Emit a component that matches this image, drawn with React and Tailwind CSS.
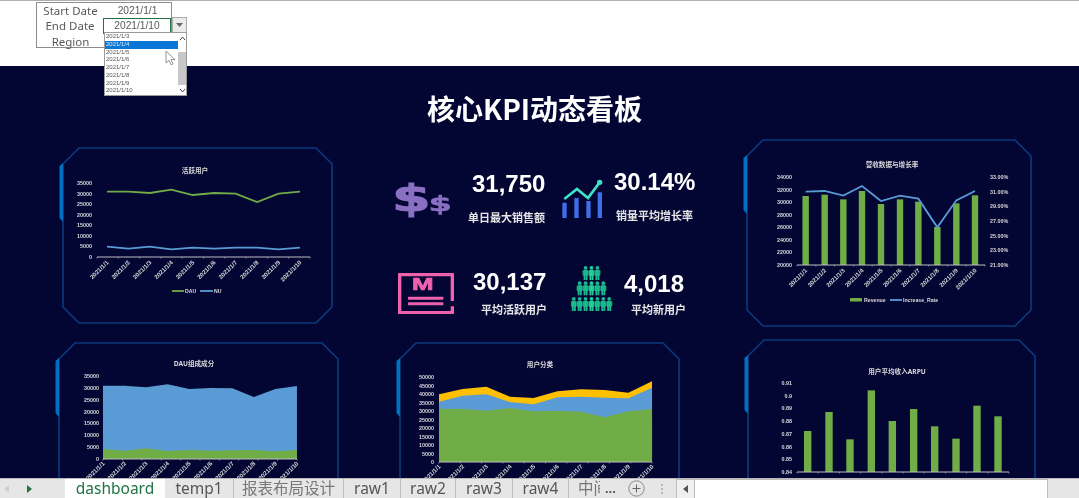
import React from "react";

const CJK = '"Noto Sans","Noto Sans CJK SC",sans-serif';
const SANS = '"Liberation Sans","Noto Sans CJK SC",sans-serif';
const DATES = [1, 2, 3, 4, 5, 6, 7, 8, 9, 10].map((d) => `2021/1/${d}`);
const GREEN = "#70ad47";
const BLUE = "#5b9bd5";
const LABEL = "#d9d9d9";

function Frame({ w, h, c = 16 }) {
  const pts = `${c},0 ${w - c},0 ${w},${c} ${w},${h - c} ${w - c},${h} ${c},${h} 0,${h - c} 0,${c}`;
  return (
    <svg className="absolute inset-0 overflow-visible" width={w} height={h}>
      <polygon points={pts} fill="none" stroke="#0b3a7e" strokeWidth="1.6" />
      <polygon points={`-3.5,${c + 2} 0,${c - 1} 0,${c + 58} -3.5,${c + 54}`} fill="#0070c0" />
    </svg>
  );
}

function Card({ w, h, title, titleClass, ox, oy, top, children, className }) {
  return (
    <div className={`relative shrink-0 ${className}`} style={{ width: w, height: h }}>
      <Frame w={w} h={h} />
      <p className={`relative text-center text-[#d9d9d9] text-[6.6px] font-bold leading-[10px] ${titleClass}`} style={{ fontFamily: CJK }}>
        {title}
      </p>
      <svg className="relative block" width={w} height={h - top} viewBox={`${ox} ${oy + top} ${w} ${h - top}`} style={{ fontFamily: SANS }}>
        {children}
      </svg>
    </div>
  );
}

function YLabels({ labels, x, y0, y1, anchor = "end" }) {
  return labels.map((t, i) => (
    <text key={i} x={x} y={y0 + ((y1 - y0) * i) / (labels.length - 1) + 2} fontSize="5.4" fontWeight="700" fill={LABEL} textAnchor={anchor}>
      {t}
    </text>
  ));
}

function XAxis({ x0, x1, y, xs, dy = 5 }) {
  const n = 10;
  const ticks = [];
  for (let i = 0; i <= n; i++) ticks.push(x0 + ((x1 - x0) * i) / n);
  return (
    <g>
      <line x1={x0} x2={x1} y1={y} y2={y} stroke="#bfbfbf" strokeWidth="1" />
      {ticks.map((t, i) => (
        <line key={i} x1={t} x2={t} y1={y} y2={y + 1.5} stroke="#bfbfbf" strokeWidth="0.6" />
      ))}
      {xs.map((x, i) => (
        <text key={i} x={x + 2} y={y + dy} fontSize="6" fontWeight="700" fill={LABEL} textAnchor="end" transform={`rotate(-45 ${x + 2} ${y + dy})`}>
          {DATES[i]}
        </text>
      ))}
    </g>
  );
}

const line = (xs, ys) => xs.map((x, i) => `${x},${ys[i]}`).join(" ");
const area = (xs, tops, bots) =>
  line(xs, tops) + " " + [...xs].reverse().map((x, i) => `${x},${bots[bots.length - 1 - i]}`).join(" ");

function ActiveChart() {
  const xs = DATES.map((_, i) => 107 + i * 21.44);
  const y = (v) => 140 + v / 3;
  const dau = [155, 155, 159, 149, 165, 159, 161, 186, 161, 155].map(y);
  const nu = [320, 326, 320, 328, 323, 326, 323, 323, 328, 323].map(y);
  return (
    <g>
      <YLabels labels={["35000", "30000", "25000", "20000", "15000", "10000", "5000", "0"]} x={92} y0={183} y1={257} />
      <XAxis x0={97} x1={310} y={257} xs={xs} dy={6} />
      <polyline points={line(xs, dau)} fill="none" stroke={GREEN} strokeWidth="1.8" />
      <polyline points={line(xs, nu)} fill="none" stroke={BLUE} strokeWidth="1.8" />
      <line x1={172} x2={184} y1={291} y2={291} stroke={GREEN} strokeWidth="1.8" />
      <text x={185} y={293} fontSize="5.2" fontWeight="700" fill={LABEL}>DAU</text>
      <line x1={200} x2={213} y1={291} y2={291} stroke={BLUE} strokeWidth="1.8" />
      <text x={214} y={293} fontSize="5.2" fontWeight="700" fill={LABEL}>NU</text>
    </g>
  );
}

function RevenueChart() {
  const cx = [212, 269, 325, 381, 438, 495, 550, 607, 664, 720].map((v) => 735 + v / 3);
  const y = (v) => 135 + v / 3;
  const tops = [183, 179, 193, 168, 207, 193, 200, 276, 205, 181].map(y);
  const rate = [170, 168, 182, 153, 198, 182, 191, 277, 196, 168].map(y);
  return (
    <g>
      <YLabels labels={["34000", "32000", "30000", "28000", "26000", "24000", "22000", "20000"]} x={792} y0={177} y1={265} />
      <YLabels labels={["33.00%", "31.00%", "29.00%", "27.00%", "25.00%", "23.00%", "21.00%"]} x={990} y0={177} y1={265} anchor="start" />
      {cx.map((x, i) => (
        <rect key={i} x={x - 3.2} y={tops[i]} width={6.4} height={265 - tops[i]} fill={GREEN} />
      ))}
      <XAxis x0={797} x1={985} y={265} xs={cx} dy={6} />
      <polyline points={line(cx, rate)} fill="none" stroke={BLUE} strokeWidth="1.8" />
      <rect x={850} y={298} width={12} height={3.5} fill={GREEN} />
      <text x={864} y={302} fontSize="5.2" fontWeight="700" fill={LABEL}>Revenue</text>
      <line x1={890} x2={902} y1={300} y2={300} stroke={BLUE} strokeWidth="1.8" />
      <text x={903} y={302} fontSize="5.2" fontWeight="700" fill={LABEL}>Increase_Rate</text>
    </g>
  );
}

function CompositionChart() {
  const xs = DATES.map((_, i) => 103 + i * 21.55);
  const y = (v) => 335 + v / 3;
  const b = [152, 152, 157, 148, 162, 159, 160, 186, 162, 153].map(y);
  const g = [342, 347, 340, 348, 345, 347, 346, 345, 349, 345].map(y);
  const base = xs.map(() => 459);
  return (
    <g>
      <YLabels labels={["35000", "30000", "25000", "20000", "15000", "10000", "5000", "0"]} x={99} y0={376} y1={459} />
      <polygon points={area(xs, b, base)} fill={BLUE} />
      <polygon points={area(xs, g, base)} fill={GREEN} />
      <XAxis x0={103} x1={297} y={459} xs={xs} />
    </g>
  );
}

function CategoryChart() {
  const xs = DATES.map((_, i) => 439 + i * 23.67);
  const y = (v) => 335 + v / 3;
  const g = [221, 222, 227, 219, 229, 227, 230, 247, 229, 222].map(y);
  const b = [200, 182, 178, 201, 208, 187, 185, 188, 190, 158].map(y);
  const o = [178, 162, 155, 185, 189, 169, 163, 165, 173, 139].map(y);
  const base = xs.map(() => 462);
  return (
    <g>
      <YLabels labels={["50000", "45000", "40000", "35000", "30000", "25000", "20000", "15000", "10000", "5000", "0"]} x={434} y0={377} y1={462} />
      <polygon points={area(xs, o, base)} fill="#ffc000" />
      <polygon points={area(xs, b, base)} fill={BLUE} />
      <polygon points={area(xs, g, base)} fill={GREEN} />
      <XAxis x0={439} x1={652} y={462} xs={xs} />
    </g>
  );
}

function ArpuChart() {
  const cx = [203, 267, 330, 394, 457, 521, 584, 648, 711, 774].map((v) => 740 + v / 3);
  const tops = [288, 231, 313, 166, 258, 222, 274, 311, 212, 244].map((v) => 335 + v / 3);
  return (
    <g>
      <YLabels labels={["0.91", "0.9", "0.89", "0.88", "0.87", "0.86", "0.85", "0.84"]} x={792} y0={383} y1={472} />
      {cx.map((x, i) => (
        <rect key={i} x={x - 3.7} y={tops[i]} width={7.4} height={472 - tops[i]} fill={GREEN} />
      ))}
      <XAxis x0={797} x1={1009} y={472} xs={cx} dy={40} />
    </g>
  );
}

function DollarIcon() {
  const font = { fontFamily: '"DejaVu Sans",sans-serif' };
  return (
    <svg width="56" height="36" viewBox="0 0 56 36" className="block overflow-visible">
      <text transform="translate(-3 29.5) scale(1.5 1)" fontSize="37" fontWeight="700" fill="#8a70c2" stroke="#8a70c2" strokeWidth="1" style={font}>$</text>
      <text transform="translate(33.5 30) scale(1.6 1)" fontSize="21" fontWeight="700" fill="#8a70c2" stroke="#8a70c2" strokeWidth="0.5" style={font}>$</text>
    </svg>
  );
}

function GrowthIcon() {
  return (
    <svg width="42" height="38" viewBox="0 0 126 114" className="block overflow-visible">
      <g fill="#3f6fe8">
        <rect x="1" y="62" width="13" height="46" rx="1" />
        <rect x="37" y="48" width="13" height="60" rx="1" />
        <rect x="73" y="57" width="13" height="51" rx="1" />
        <rect x="107" y="31" width="13" height="77" rx="1" />
      </g>
      <polyline points="7,51 45,21 78,48 113,1" fill="none" stroke="#3fe0c8" strokeWidth="8" />
      <circle cx="113" cy="1" r="8" fill="#3fe0c8" />
    </svg>
  );
}

function MailIcon() {
  return (
    <svg width="56" height="41" viewBox="0 0 168 123" className="block">
      <path d="M164 84V10a6 6 0 0 0-6-6H10a6 6 0 0 0-6 6v104a6 6 0 0 0 6 6h148a6 6 0 0 0 6-6v-14" fill="none" stroke="#ee62ad" strokeWidth="12" />
      <text transform="translate(42 52) scale(1.55 1)" fontSize="50" fontWeight="700" fill="#ee62ad" stroke="#ee62ad" strokeWidth="2" style={{ fontFamily: '"Liberation Sans",sans-serif' }}>M</text>
      <rect x="30" y="71" width="106" height="9" rx="2" fill="#ee62ad" />
      <rect x="30" y="88" width="106" height="9" rx="2" fill="#ee62ad" />
    </svg>
  );
}

function Person({ x, y, fill }) {
  return (
    <g transform={`translate(${x} ${y})`}>
      <rect x="-3.1" y="4.2" width="6.2" height="5.4" rx="1" fill="#159477" />
      <circle cx="0" cy="1.9" r="1.9" fill={fill} />
      <rect x="-2.2" y="4" width="4.4" height="6" rx="0.6" fill={fill} />
      <rect x="-2" y="9" width="1.9" height="5" fill={fill} />
      <rect x="0.1" y="9" width="1.9" height="5" fill={fill} />
    </g>
  );
}

function PeopleIcon() {
  const rows = [
    { y: 0, n: 3 },
    { y: 15.3, n: 5 },
    { y: 31, n: 7 },
  ];
  return (
    <svg width="42" height="46" viewBox="0 0 42 46" className="block">
      {rows.map((r) =>
        Array.from({ length: r.n }).map((_, i) => {
          const x = 20.5 + (i - (r.n - 1) / 2) * 5.9;
          return <Person key={`${r.y}-${i}`} x={x} y={r.y} fill={i === (r.n - 1) / 2 ? "#22cf98" : "#1ab88c"} />;
        })
      )}
    </svg>
  );
}

function Num({ children, className = "" }) {
  return (
    <div className={`text-white text-[24px] font-bold leading-[30px] whitespace-nowrap ${className}`} style={{ fontFamily: SANS }}>
      {children}
    </div>
  );
}
function Lab({ children, className = "" }) {
  return (
    <div className={`text-[#e6e6e6] text-[11px] font-bold leading-[14px] whitespace-nowrap ${className}`} style={{ fontFamily: CJK }}>
      {children}
    </div>
  );
}

function DateList() {
  const items = ["2021/1/3", "2021/1/4", "2021/1/5", "2021/1/6", "2021/1/7", "2021/1/8", "2021/1/9", "2021/1/10"];
  return (
    <div className="absolute left-[68px] top-[30px] z-10 flex h-[64px] w-[83px] bg-white border border-[#9a9a9a]">
      <ul className="w-[73px] text-[6px] text-[#555] leading-[7.75px]" style={{ fontFamily: SANS }}>
        {items.map((d) => (
          <li key={d} className={d === "2021/1/4" ? "pl-[1px] bg-[#0a76d6] text-[#dbe9f8]" : "pl-[1px]"}>
            {d}
          </li>
        ))}
      </ul>
      <div className="flex w-[8px] flex-col items-center justify-between">
        <svg width="7" height="18" viewBox="0 0 7 18"><path d="M1 7l2.5-3L6 7" fill="none" stroke="#444" strokeWidth="1" /></svg>
        <div className="h-[33px] w-[8px] bg-[#c8c8c8]" />
        <svg width="7" height="9" viewBox="0 0 7 9"><path d="M1 3l2.5 3L6 3" fill="none" stroke="#444" strokeWidth="1" /></svg>
      </div>
    </div>
  );
}

function Cursor() {
  return (
    <svg className="absolute left-[129px] top-[48px] z-20" width="11" height="16" viewBox="0 0 11 16">
      <path d="M1 1v12l3-2.6 2 4.4 2-1-2-4.2h4z" fill="#fff" stroke="#777" strokeWidth="0.8" />
    </svg>
  );
}

function FormCell({ label, value, active }) {
  return (
    <div className="flex h-[15.4px] items-center text-[#595959] leading-none" style={{ fontFamily: CJK }}>
      <div className="w-[67px] text-center text-[11.5px]">{label}</div>
      {value && !active && <div className="flex-1 text-center text-[10.2px]" style={{ fontFamily: SANS }}>{value}</div>}
      {active && (
        <div className="relative z-10 flex h-[16px] w-[69px] items-center justify-center border border-[#217346] bg-white text-[10.2px]" style={{ fontFamily: SANS }}>{value}</div>
      )}
    </div>
  );
}

function Tab({ children, className, active }) {
  return (
    <div
      className={`flex h-full shrink-0 items-center justify-center text-[15.5px] leading-none whitespace-nowrap overflow-hidden ${active ? "bg-white text-[#217346]" : "text-[#555] border-r border-[#bdbdbd]"} ${className}`}
      style={{ fontFamily: CJK }}
    >
      {children}
    </div>
  );
}

export default function App() {
  return (
    <div className="flex h-[498px] w-[1079px] flex-col overflow-hidden bg-white blur-[0.35px]">
      <header className="relative h-[66px] shrink-0 border-t border-[#b0b0b0] pl-[36px] pt-[1px]">
        <div className="relative w-[136px]">
          <div className="h-[46px] border-x border-b border-t border-[#8c8c8c]">
            <FormCell label="Start Date" value="2021/1/1" />
            <FormCell label="End Date" value="2021/1/10" active />
            <FormCell label="Region" />
          </div>
          <div className="absolute left-[136px] top-[15px] z-10 flex h-[16px] w-[15px] items-center justify-center border border-[#aaa] bg-[#ececec]">
            <svg width="7" height="4" viewBox="0 0 7 4"><path d="M0 0h7L3.5 4z" fill="#666" /></svg>
          </div>
          <DateList />
          <Cursor />
        </div>
      </header>

      <main className="min-h-0 flex-1 overflow-hidden bg-[#030533]">
        <h1 className="pr-[10px] pt-[22px] text-center text-[28px] font-bold leading-[40px] text-white" style={{ fontFamily: '"Noto Sans CJK SC","Noto Sans",sans-serif' }}>
          核心KPI动态看板
        </h1>

        <section className="flex h-[198px] items-start pl-[63px]">
          <Card w={269} h={175} className="mt-[20px]" title="活跃用户" titleClass="w-[264px] pt-[18px]" ox={63} oy={148} top={28}>
            <ActiveChart />
          </Card>

          <div className="ml-[63px] w-[352px] shrink-0 pt-[39px]">
            <div className="flex h-[99px] items-start">
              <div className="flex w-[167px] shrink-0">
                <div className="mt-[14px]"><DollarIcon /></div>
                <div className="ml-[17px]">
                  <Num className="ml-[4px] mt-[2px]">31,750</Num>
                  <Lab className="mt-[12px]">单日最大销售额</Lab>
                </div>
              </div>
              <div className="flex">
                <div className="mt-[15px]"><GrowthIcon /></div>
                <div className="ml-[10px]">
                  <Num>30.14%</Num>
                  <Lab className="ml-[2px] mt-[12px]">销量平均增长率</Lab>
                </div>
              </div>
            </div>
            <div className="flex items-start">
              <div className="ml-[3px] flex w-[173px] shrink-0">
                <div className="mt-[7px]"><MailIcon /></div>
                <div className="ml-[19px]">
                  <Num className="mt-[1px]">30,137</Num>
                  <Lab className="ml-[8px] mt-[6px]">平均活跃用户</Lab>
                </div>
              </div>
              <div className="flex">
                <PeopleIcon />
                <div className="ml-[11px]">
                  <Num className="mt-[3px]">4,018</Num>
                  <Lab className="ml-[7px] mt-[4px]">平均新用户</Lab>
                </div>
              </div>
            </div>
          </div>

          <Card w={284} h={186} className="mt-[12px]" title="营收数据与增长率" titleClass="w-[290px] pt-[20px]" ox={747} oy={140} top={30}>
            <RevenueChart />
          </Card>
        </section>

        <section className="flex items-start pl-[59px] pt-[14px]">
          <Card w={279} h={186} className="mt-[3px]" title="DAU组成成分" titleClass="w-[270px] pt-[16px]" ox={59} oy={343} top={26}>
            <CompositionChart />
          </Card>
          <Card w={279} h={186} className="ml-[62px] mt-[3px]" title="用户分类" titleClass="w-[280px] pt-[17px]" ox={400} oy={343} top={27}>
            <CategoryChart />
          </Card>
          <Card w={287} h={186} className="ml-[69px]" title="用户平均收入ARPU" titleClass="w-[298px] pt-[27px]" ox={748} oy={340} top={37}>
            <ArpuChart />
          </Card>
        </section>
      </main>

      <footer className="flex h-[20px] shrink-0 items-center border-t border-[#b9b9b9] bg-[#e6e6e6]">
        <div className="flex h-full w-[65px] shrink-0 items-center pl-[4px]">
          <svg width="5" height="8" viewBox="0 0 5 8"><path d="M5 0v8L0 4z" fill="#cfcfcf" /></svg>
          <svg className="ml-[18px]" width="5" height="8" viewBox="0 0 5 8"><path d="M0 0v8l5-4z" fill="#217346" /></svg>
        </div>
        <Tab active className="w-[100px]">dashboard</Tab>
        <Tab className="w-[69px]">temp1</Tab>
        <Tab className="w-[110px]"><span className="text-[#777]">报表布局设计</span></Tab>
        <Tab className="w-[57px]">raw1</Tab>
        <Tab className="w-[55px]">raw2</Tab>
        <Tab className="w-[57px]">raw3</Tab>
        <Tab className="w-[56px]">raw4</Tab>
        <div className="flex h-full w-[31px] shrink-0 items-center justify-start overflow-hidden pl-[9px] text-[15.5px] leading-none text-[#777] whitespace-nowrap" style={{ fontFamily: CJK }}>
          中间
        </div>
        <div className="ml-[5px] shrink-0 text-[13px] font-bold leading-none text-[#555]" style={{ fontFamily: SANS }}>...</div>
        <svg className="ml-[12px] shrink-0" width="17" height="17" viewBox="0 0 17 17">
          <circle cx="8.5" cy="8.5" r="7.7" fill="none" stroke="#8a8a8a" strokeWidth="1" />
          <path d="M8.5 4.5v8M4.5 8.5h8" stroke="#666" strokeWidth="1" />
        </svg>
        <div className="ml-[16px] flex shrink-0 flex-col gap-[2px]">
          <span className="h-[2px] w-[2px] bg-[#b5b5b5]" />
          <span className="h-[2px] w-[2px] bg-[#b5b5b5]" />
          <span className="h-[2px] w-[2px] bg-[#b5b5b5]" />
        </div>
        <div className="ml-[13px] flex h-full w-[372px] shrink-0 items-center border border-b-0 border-[#bdbdbd] bg-white">
          <div className="flex h-full w-[18px] items-center justify-center border-r border-[#bdbdbd] bg-[#f0f0f0]">
            <svg width="5" height="8" viewBox="0 0 5 8"><path d="M5 0v8L0 4z" fill="#555" /></svg>
          </div>
        </div>
      </footer>
    </div>
  );
}
